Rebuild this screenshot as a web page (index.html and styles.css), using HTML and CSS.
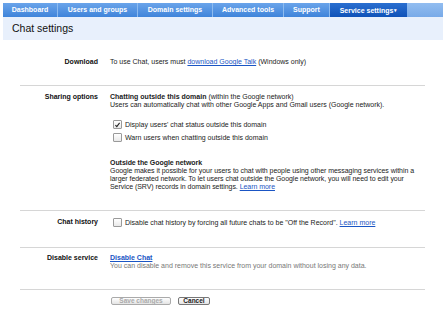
FILE: index.html
```html
<!DOCTYPE html>
<html lang="en">
<head>
  <meta charset="UTF-8">
  <title>Chat settings</title>
  <link rel="stylesheet" href="styles.css">
</head>
<body>
  <div class="page">
    <div class="nav">
      <div class="tab t1">Dashboard</div>
      <div class="tab t2">Users and groups</div>
      <div class="tab t3">Domain settings</div>
      <div class="tab t4">Advanced tools</div>
      <div class="tab t5">Support</div>
      <div class="tab t6 active">Service settings<span class="caret">&#9662;</span></div>
      <div class="tab rest"></div>
    </div>
    <div class="header">Chat settings</div>

    <div class="sections">
      <div class="row download">
        <div class="label">Download</div>
        <div class="content">To use Chat, users must <a href="#">download Google Talk</a> (Windows only)</div>
      </div>

      <div class="row sharing">
        <div class="label">Sharing options</div>
        <div class="content">
          <div><b>Chatting outside this domain</b> (within the Google network)</div>
          <div>Users can automatically chat with other Google Apps and Gmail users (Google network).</div>
          <div class="checks">
            <div class="check">
              <span class="box"><svg width="8" height="8" viewBox="0 0 8 8"><path d="M1.6 4.2 L3.2 5.9 L6.4 1.6" fill="none" stroke="#222" stroke-width="1.2"/></svg></span>
              <span>Display users' chat status outside this domain</span>
            </div>
            <div class="check"><span class="box"></span><span>Warn users when chatting outside this domain</span></div>
          </div>
          <div class="outside">
            <div><b>Outside the Google network</b></div>
            <div>Google makes it possible for your users to chat with people using other messaging services within a larger federated network. To let users chat outside the Google network, you will need to edit your Service (SRV) records in domain settings. <a href="#" class="more">Learn more</a></div>
          </div>
        </div>
      </div>

      <div class="row history">
        <div class="label">Chat history</div>
        <div class="content">
          <div class="check"><span class="box"></span><span>Disable chat history by forcing all future chats to be "Off the Record". <a href="#" class="more">Learn more</a></span></div>
        </div>
      </div>

      <div class="row disable">
        <div class="label">Disable service</div>
        <div class="content">
          <div><a href="#" class="strong-link">Disable Chat</a></div>
          <div class="muted">You can disable and remove this service from your domain without losing any data.</div>
        </div>
      </div>

      <div class="buttons">
        <button class="btn" disabled>Save changes</button>
        <button class="btn">Cancel</button>
      </div>
    </div>
  </div>
</body>
</html>
```

FILE: styles.css
```css
* {
  margin: 0;
  padding: 0;
  box-sizing: border-box;
}

body {
  background: #fff;
  font-family: "Liberation Sans", Arial, sans-serif;
  color: #222;
}

.page {
  padding: 3px 3px 0 3px;
}

.nav {
  display: flex;
  height: 14px;
}

.tab {
  background: linear-gradient(#6aa4ea, #3f84da);
  color: #fff;
  font-size: 7px;
  font-weight: bold;
  line-height: 14px;
  text-align: center;
  border-right: 1px solid #8dbbef;
  white-space: nowrap;
}

.t1 { width: 55px; }
.t2 { width: 80px; }
.t3 { width: 75px; }
.t4 { width: 71px; }
.t5 { width: 46px; }
.t6 { width: 77px; }

.tab.active {
  background: linear-gradient(#2a6fd0, #0f52b8);
  border-right: none;
}

.caret {
  font-size: 5px;
  margin-left: 1px;
  vertical-align: 1px;
}

.tab.rest {
  flex: 1;
  background: linear-gradient(#92bdf0, #78aae8);
  border-right: none;
}

.header {
  height: 23px;
  background: #e8f0fc;
  font-size: 10.5px;
  line-height: 23px;
  padding-left: 9px;
  color: #111;
}

.sections {
  margin: 0 18px 0 17px;
  font-size: 7px;
  line-height: 8px;
}

.row {
  display: grid;
  grid-template-columns: 78px 1fr;
  column-gap: 12px;
  border-bottom: 1px solid #d6d6d6;
}

.label {
  text-align: right;
  font-weight: bold;
  color: #111;
}

a {
  color: #1a55c4;
}

a.more {
  display: inline-block;
}

.download {
  padding: 18px 0 19px;
}

.sharing {
  padding: 7px 0 19px;
}

.checks {
  margin-top: 11px;
  display: flex;
  flex-direction: column;
  gap: 4px;
}

.check {
  display: flex;
  align-items: center;
  gap: 3px;
  padding-left: 3px;
}

.box {
  width: 9px;
  height: 9px;
  border: 1px solid #9a9a9a;
  border-radius: 1px;
  background: linear-gradient(#fff, #e9e9e9);
  display: flex;
  align-items: center;
  justify-content: center;
  flex-shrink: 0;
}

.box svg {
  display: block;
}

.outside {
  margin-top: 17px;
  letter-spacing: -0.05px;
}

.history {
  padding: 7px 0 20px;
}

.disable {
  padding: 6px 0 19px;
}

.strong-link {
  font-weight: bold;
}

.muted {
  color: #777;
}

.buttons {
  padding: 7px 0 0 91px;
  display: flex;
  gap: 7px;
}

.btn {
  font-family: "Liberation Sans", Arial, sans-serif;
  font-size: 6.5px;
  font-weight: bold;
  height: 8px;
  line-height: 6px;
  padding: 0 4px;
  border: 1px solid #777;
  border-radius: 2px;
  background: linear-gradient(#fff, #e4e4e4);
  color: #222;
}

.btn[disabled] {
  color: #aaa;
  border-color: #aaa;
  width: 60px;
}

.btn:not([disabled]) {
  width: 32px;
}
```
